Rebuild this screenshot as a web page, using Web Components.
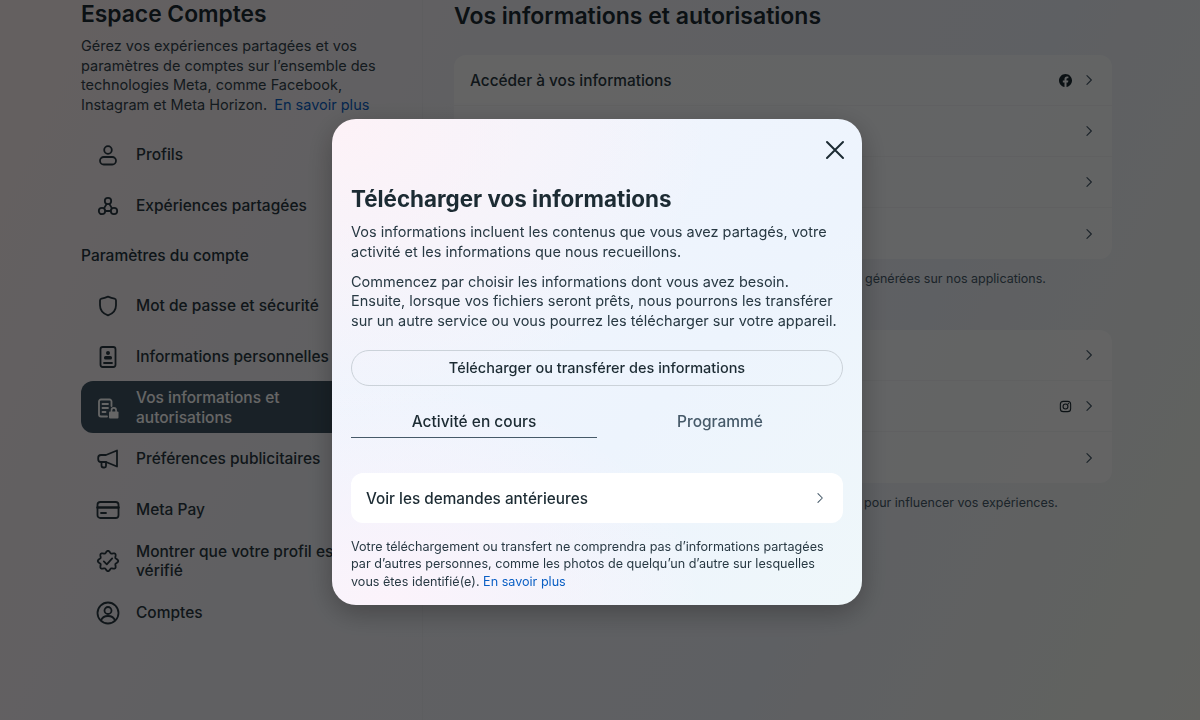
<!DOCTYPE html>
<html lang="fr">
<head>
<meta charset="utf-8">
<title>Espace Comptes</title>
<style>
  html, body { margin: 0; height: 720px; overflow: hidden; }
  body {
    font-family: Inter, "Liberation Sans", sans-serif;
    color: #1c2b33;
    background: linear-gradient(115deg, #fbeff0 0%, #f0f1f6 35%, #ecf0f7 70%, #f4f6ee 100%);
  }
</style>
</head>
<body>
<accounts-page>
  <side-nav slot="side">
    <nav-item icon="person">Profils</nav-item>
    <nav-item icon="shared">Expériences partagées</nav-item>
    <nav-heading>Paramètres du compte</nav-heading>
    <nav-item icon="shield">Mot de passe et sécurité</nav-item>
    <nav-item icon="id">Informations personnelles</nav-item>
    <nav-item icon="docLock" active>Vos informations et autorisations</nav-item>
    <nav-item icon="megaphone">Préférences publicitaires</nav-item>
    <nav-item icon="card">Meta Pay</nav-item>
    <nav-item icon="verified" tall>Montrer que votre profil est vérifié</nav-item>
    <nav-item icon="account">Comptes</nav-item>
  </side-nav>

  <settings-card>
    <settings-row trailing="facebook">Accéder à vos informations</settings-row>
    <settings-row></settings-row>
    <settings-row></settings-row>
    <settings-row></settings-row>
  </settings-card>
  <card-note style="--note-offset:411px">générées sur nos applications.</card-note>
  <settings-card class="second">
    <settings-row></settings-row>
    <settings-row trailing="instagram"></settings-row>
    <settings-row></settings-row>
  </settings-card>
  <card-note style="--note-offset:410px">pour influencer vos expériences.</card-note>
</accounts-page>

<modal-dialog heading="Télécharger vos informations">
  <p>Vos informations incluent les contenus que vous avez partagés, votre activité et les informations que nous recueillons.</p>
  <p>Commencez par choisir les informations dont vous avez besoin. Ensuite, lorsque vos fichiers seront prêts, nous pourrons les transférer sur un autre service ou vous pourrez les télécharger sur votre appareil.</p>
  <pill-button slot="actions">Télécharger ou transférer des informations</pill-button>
  <tab-bar slot="actions">
    <tab-item active>Activité en cours</tab-item>
    <tab-item>Programmé</tab-item>
  </tab-bar>
  <link-row slot="actions">Voir les demandes antérieures</link-row>
  <div slot="footnote">Votre téléchargement ou transfert ne comprendra pas d’informations partagées par d’autres personnes, comme les photos de quelqu’un d’autre sur lesquelles</div>
  <div slot="footnote">vous êtes identifié(e). <a>En savoir plus</a></div>
</modal-dialog>

<script>
// scalloped ring for the "verified" badge
const badgePoints = [];
for (let i = 0; i < 96; i++) {
  const a = i / 96 * Math.PI * 2;
  const r = 9.1 + 1.1 * Math.cos(a * 8);
  badgePoints.push((12 + r * Math.cos(a)).toFixed(2) + ',' + (12 + r * Math.sin(a)).toFixed(2));
}

const ICONS = {
  person: '<circle cx="12" cy="7" r="3.8"/><rect x="4" y="14" width="16" height="7.5" rx="3.75"/>',
  shared: '<circle cx="12" cy="7" r="3.2"/><circle cx="6" cy="17" r="3.2"/><circle cx="18" cy="17" r="3.2"/><path d="M10.6 10l-2.6 4.4M13.4 10l2.6 4.4M9.2 17h5.6"/>',
  shield: '<path d="M4 6.4c0-1 .6-1.6 1.5-1.8C8 4.1 10 3.4 12 2.6c2 .8 4 1.5 6.5 2 .9.2 1.5.8 1.5 1.8v4.8c0 5-3.6 8.6-8 10.2-4.4-1.6-8-5.2-8-10.2z"/>',
  id: '<rect x="4.5" y="2" width="15" height="20" rx="2.2"/><circle cx="12" cy="8" r="2" fill="currentColor" stroke="none"/><rect x="8" y="11" width="8" height="3.6" rx="1.6" fill="currentColor" stroke="none"/><path d="M8 18h8"/>',
  docLock: '<path d="M15.5 10V5.5a2 2 0 0 0-2-2H5a2 2 0 0 0-2 2v13a2 2 0 0 0 2 2h6"/><path d="M6.5 8h5.5M6.5 12h5.5M6.5 16h3"/><rect x="13" y="15.5" width="9.5" height="7" rx="1" fill="currentColor" stroke="none"/><path d="M15.5 15.5v-1.3a2.3 2.3 0 0 1 4.6 0v1.3" stroke-width="1.6"/>',
  megaphone: '<path d="M21 3.5L10 8H5a2.8 2.8 0 0 0-2.8 2.8v1.4A2.8 2.8 0 0 0 5 15h5l11 4.5z"/><path d="M5.5 15v3.500A2 2 0 0 0 7.500 20.500h1a1.500 1.500 0 0 0 1.500-1.500v-4"/>',
  card: '<rect x="1.500" y="4" width="21" height="16" rx="2.800"/><path d="M1.500 9.500h21" stroke-width="2.400"/><path d="M5 15h5"/>',
  verified: '<polygon points="' + badgePoints.join(' ') + '"/><path d="M7.800 12.400l3 3 5.400-6"/>',
  account: '<circle cx="12" cy="12" r="10.500"/><circle cx="12" cy="9.500" r="3.500"/><path d="M5 19.500c1-3 3.800-4.500 7-4.500s6 1.500 7 4.500"/>',
  chevron: '<path d="M8.500 4.500L16 12l-7.500 7.500"/>',
  close: '<path d="M4 4l16 16M20 4L4 20"/>',
  instagram: '<rect x="2.500" y="2.500" width="19" height="19" rx="5.500"/><circle cx="12" cy="12" r="4.500"/><circle cx="17.300" cy="6.700" r="1.300" fill="currentColor" stroke="none"/>',
  facebook: '<path fill="currentColor" stroke="none" d="M24 12.070C24 5.400 18.630 0 12 0S0 5.400 0 12.070c0 6.030 4.390 11.020 10.130 11.930v-8.440H7.080v-3.490h3.050V9.410c0-3.020 1.790-4.690 4.530-4.690 1.310 0 2.680.24 2.680.24v2.970h-1.510c-1.490 0-1.960.93-1.960 1.850v2.270h3.330l-.53 3.490h-2.800V24C19.610 23.090 24 18.100 24 12.070z"/>'
};

// small helper, every element below is the same few lines
const define = (name, html, init) => customElements.define(name, class extends HTMLElement {
  constructor() {
    super();
    this.attachShadow({mode: 'open'}).innerHTML = html;
    if (init) init(this, this.shadowRoot);
  }
});

define('ui-icon', `
  <style>
    :host { display: inline-flex; flex: none; width: var(--size, 24px); height: var(--size, 24px); }
    svg { width: 100%; height: 100%; fill: none; stroke: currentColor; stroke-width: var(--sw, 2); stroke-linecap: round; stroke-linejoin: round; }
  </style>
  <svg viewBox="0 0 24 24"></svg>`, (el, root) => {
    root.querySelector('svg').innerHTML = ICONS[el.getAttribute('name')] || '';
  });

define('accounts-page', `
  <style>
    :host { display: flex; height: 720px; padding-left: 81px; box-sizing: border-box; }
    .side { width: 341px; flex: none; border-right: 1px solid rgba(0,0,0,.025); }
    main { width: 658px; margin-left: 31px; padding-top: 2px; }
    h1 { margin: 0 0 25px; font-size: 23px; line-height: 28px; font-weight: 620; color: #1c2b33; }
  </style>
  <div class="side"><slot name="side"></slot></div>
  <main>
    <h1>Vos informations et autorisations</h1>
    <slot></slot>
  </main>`);

define('side-nav', `
  <style>
    :host { display: block; width: 300px; }
    h2 { margin: 0; font-size: 22.800px; line-height: 28px; font-weight: 620; }
    p { margin: 8px 0 15px; font-size: 14.500px; line-height: 19.500px; color: #33444e; }
    span { display: block; }
    a { color: #0a5fc4; margin-left: 3px; }
  </style>
  <h2>Espace Comptes</h2>
  <p><span>Gérez vos expériences partagées et vos paramètres de comptes sur l’ensemble des technologies Meta, comme Facebook,</span><span>Instagram et Meta Horizon. <a>En savoir plus</a></span></p>
  <slot></slot>`);

define('nav-heading', `
  <style>
    :host { display: flex; align-items: center; height: 49px; font-size: 15.500px; font-weight: 550; color: #243640; }
  </style>
  <slot></slot>`);

define('nav-item', `
  <style>
    :host { display: flex; align-items: center; gap: 16px; min-height: 51px; padding: 0 20px 0 15px; box-sizing: border-box; font-size: 15.500px; line-height: 19.500px; font-weight: 450; color: #2a3942; border-radius: 12px; --sw: 1.800; }
    :host([active]) { background: #3f5462; color: #fff; min-height: 52px; margin-top: -1px; padding-top: 1px; }
    :host([tall]) { min-height: 52px; }
  </style>
  <ui-icon></ui-icon>
  <span><slot></slot></span>`, (el, root) => {
    const icon = root.querySelector('ui-icon');
    icon.shadowRoot.querySelector('svg').innerHTML = ICONS[el.getAttribute('icon')] || '';
  });

define('settings-card', `
  <style>
    :host { display: block; border-radius: 12px; overflow: hidden; background: rgba(255,255,255,.6); }
    :host(.second) { margin-top: 43px; }
  </style>
  <slot></slot>`);

define('settings-row', `
  <style>
    :host { display: flex; align-items: center; height: 51px; padding: 0 16px 0 16px; box-sizing: border-box; font-size: 15.400px; font-weight: 450; color: #2a3942; border-bottom: 1px solid rgba(0,0,0,.03); }
    :host(:last-child) { border-bottom: 0; }
    .label { flex: 1; }
    .brand { --size: 13px; margin-right: 10px; color: #1c2b33; }
    .chev { --size: 14px; color: #465a69; }
  </style>
  <span class="label"><slot></slot></span>
  <ui-icon class="brand"></ui-icon>
  <ui-icon class="chev"></ui-icon>`, (el, root) => {
    root.querySelector('.chev').shadowRoot.querySelector('svg').innerHTML = ICONS.chevron;
    const brand = root.querySelector('.brand');
    const name = el.getAttribute('trailing');
    if (name) brand.shadowRoot.querySelector('svg').innerHTML = ICONS[name];
    else brand.style.visibility = 'hidden';
  });

define('card-note', `
  <style>
    :host { display: block; margin-top: 11px; padding-left: var(--note-offset, 0); font-size: 12.500px; line-height: 17px; color: #465a69; }
  </style>
  <slot></slot>`);

define('modal-dialog', `
  <style>
    :host { position: fixed; inset: 0; display: flex; justify-content: center; align-items: flex-start; padding: 119px 6px 0 0; box-sizing: border-box; background: rgba(0,0,0,.6); }
    .box { width: 530px; height: 486px; box-sizing: border-box; padding: 0 19px; border-radius: 24px; display: flex; flex-direction: column; box-shadow: 0 8px 28px rgba(0,0,0,.28);
      background:
        radial-gradient(380px 300px at 0% 0%, #fdf2f7 0%, rgba(253,242,247,0) 100%),
        radial-gradient(320px 220px at 10% 100%, #fcf3fb 0%, rgba(252,243,251,0) 100%),
        linear-gradient(135deg, #f2f5fd 0%, #edf4fd 60%, #eff7fa 100%); }
    header { display: flex; justify-content: flex-end; padding-top: 19px; height: 47px; }
    .close { --size: 24px; --sw: 2; color: #1c2b33; margin-right: -4px; }
    h2 { margin: 0; font-size: 22.400px; line-height: 28px; font-weight: 650; color: #1c2b33; }
    .copy { margin-top: 9px; font-size: 14.500px; line-height: 19.500px; color: #283943; }
    ::slotted(p) { margin: 0 0 10.500px; }
    .actions { margin-top: 9px; display: flex; flex-direction: column; }
    .note { margin-top: 15px; font-size: 12.600px; line-height: 17.500px; color: #283943; }
  </style>
  <div class="box" role="dialog">
    <header><ui-icon class="close"></ui-icon></header>
    <h2></h2>
    <div class="copy"><slot></slot></div>
    <div class="actions"><slot name="actions"></slot></div>
    <div class="note"><slot name="footnote"></slot></div>
  </div>`, (el, root) => {
    root.querySelector('h2').textContent = el.getAttribute('heading');
    root.querySelector('.close').shadowRoot.querySelector('svg').innerHTML = ICONS.close;
  });

define('pill-button', `
  <style>
    :host { display: flex; align-items: center; justify-content: center; height: 36px; box-sizing: border-box; border: 1px solid #cbd2d9; border-radius: 18px; font-size: 14.500px; font-weight: 500; color: #1c2b33; }
  </style>
  <slot></slot>`);

define('tab-bar', `
  <style>
    :host { display: flex; margin-top: 19px; margin-bottom: 34.500px; }
  </style>
  <slot></slot>`);

define('tab-item', `
  <style>
    :host { flex: 1; display: flex; align-items: center; justify-content: center; height: 33.500px; padding-top: 1px; box-sizing: border-box; font-size: 15.500px; font-weight: 500; color: #465a69; border-bottom: 1.500px solid transparent; }
    :host([active]) { color: #1c2b33; border-bottom-color: #465a69; }
  </style>
  <slot></slot>`);

define('link-row', `
  <style>
    :host { display: flex; align-items: center; justify-content: space-between; height: 50px; padding: 1px 16px 0 15px; box-sizing: border-box; background: #fff; border-radius: 12px; font-size: 15.300px; font-weight: 500; color: #1c2b33; }
    ui-icon { --size: 14px; --sw: 1.800; color: #465a69; }
  </style>
  <slot></slot>
  <ui-icon></ui-icon>`, (el, root) => {
    root.querySelector('ui-icon').shadowRoot.querySelector('svg').innerHTML = ICONS.chevron;
  });
</script>
<style>
  modal-dialog a { color: #0a5fc4; }
</style>
</body>
</html>
